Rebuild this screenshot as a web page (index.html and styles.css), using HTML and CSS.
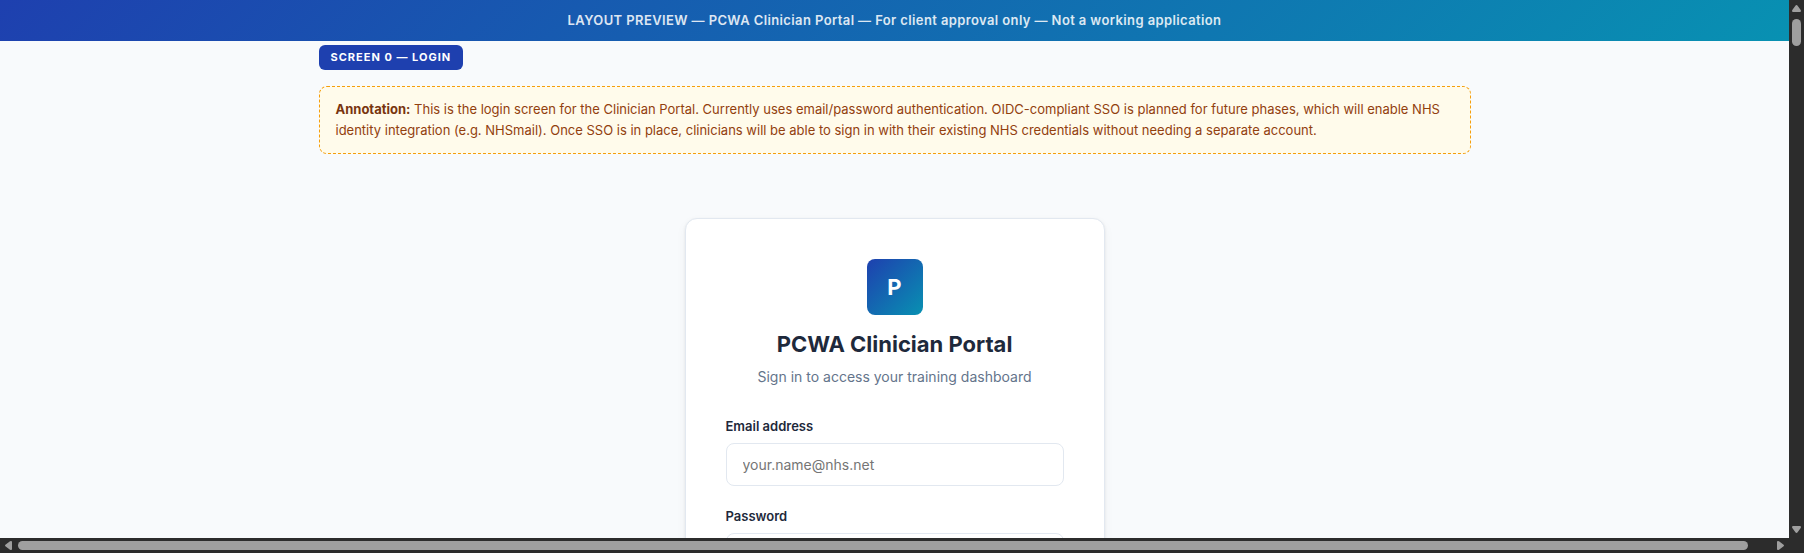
FILE: index.html
```html
<!DOCTYPE html>
<html lang="en">
<head>
<meta charset="utf-8">
<title>PCWA Clinician Portal</title>
<link rel="stylesheet" href="styles.css">
</head>
<body>
<div class="window">
  <div class="viewport">
    <header class="banner"><span class="banner-text">LAYOUT PREVIEW — PCWA Clinician Portal — For client approval only — Not a working application</span></header>
    <main class="screen">
      <div class="screen-label">SCREEN 0 — LOGIN</div>
      <p class="annotation"><strong>Annotation:</strong> This is the login screen for the Clinician Portal. Currently uses email/password authentication. OIDC-compliant SSO is planned for future phases, which will enable NHS identity integration (e.g. NHSmail). Once SSO is in place, clinicians will be able to sign in with their existing NHS credentials without needing a separate account.</p>
      <form class="card">
        <div class="logo">P</div>
        <h1 class="title">PCWA Clinician Portal</h1>
        <p class="subtitle">Sign in to access your training dashboard</p>
        <div class="field">
          <label class="label" for="email">Email address</label>
          <input class="input" id="email" type="email" placeholder="your.name@nhs.net">
        </div>
        <div class="field">
          <label class="label" for="password">Password</label>
          <input class="input" id="password" type="password">
        </div>
      </form>
    </main>
  </div>
  <div class="bar bar-vertical">
    <svg class="arrow" viewBox="0 0 9 7"><path d="M4.5 0Q5.2 0 5.6.7L8.7 5Q9.4 7 8 7H1Q-.4 7 .3 5L3.4.7Q3.8 0 4.5 0Z"/></svg>
    <div class="thumb thumb-vertical"></div>
    <svg class="arrow arrow-end" viewBox="0 0 9 7"><path d="M4.5 7Q5.2 7 5.6 6.3L8.7 2Q9.4 0 8 0H1Q-.4 0 .3 2L3.4 6.3Q3.8 7 4.5 7Z"/></svg>
  </div>
  <div class="bar bar-horizontal">
    <svg class="arrow-side" viewBox="0 0 7 9"><path d="M0 4.5Q0 3.8.7 3.4L5 .3Q7-.4 7 1V8Q7 9.4 5 8.7L.7 5.6Q0 5.2 0 4.5Z"/></svg>
    <div class="thumb thumb-horizontal"></div>
    <svg class="arrow-side" viewBox="0 0 7 9"><path d="M7 4.5Q7 3.8 6.3 3.4L2 .3Q0-.4 0 1V8Q0 9.4 2 8.7L6.3 5.6Q7 5.2 7 4.5Z"/></svg>
  </div>
  <div class="corner"></div>
</div>
</body>
</html>
```
FILE: styles.css
```css
* { box-sizing: border-box; }
body {
  margin: 0;
  font-family: Inter, "Liberation Sans", sans-serif;
  color: #1e293b;
  background: #f8fafc;
}
.window {
  display: grid;
  grid-template-columns: minmax(0, 1fr) 15px;
  grid-template-rows: minmax(0, 1fr) 15px;
  height: 100vh;
}
.viewport { overflow: hidden; background: #f8fafc; }
.banner {
  padding: 10px 24px;
  font-size: 13px;
  font-weight: 600;
  line-height: 21px;
  text-align: center;
  color: #fff;
  background: linear-gradient(135deg, #1e40af, #0891b2);
  letter-spacing: 0.03em;
}
.banner-text { opacity: 0.85; }
.screen {
  max-width: 1200px;
  margin: 0 auto;
  padding: 4px 24px 48px;
}
.screen-label {
  width: fit-content;
  padding: 4px 12px;
  border-radius: 6px;
  font-size: 11px;
  font-weight: 700;
  line-height: 17px;
  letter-spacing: 1px;
  color: #fff;
  background: #1e40af;
}
.annotation {
  margin: 16px 0 64px;
  padding: 12px 16px;
  border: 1px dashed #f59e0b;
  border-radius: 8px;
  font-size: 13px;
  line-height: 21px;
  color: #92400e;
  background: #fffbeb;
}
.annotation strong { color: #78350f; }
.card {
  max-width: 420px;
  margin: 0 auto;
  padding: 40px;
  border: 1px solid #e2e8f0;
  border-radius: 12px;
  background: #fff;
  box-shadow: 0 1px 3px rgba(0, 0, 0, 0.08), 0 4px 12px rgba(0, 0, 0, 0.04);
}
.logo {
  display: grid;
  place-items: center;
  width: 56px;
  height: 56px;
  margin: 0 auto 12px;
  border-radius: 8px;
  font-size: 22px;
  font-weight: 700;
  color: #fff;
  background: linear-gradient(135deg, #1e40af, #0891b2);
}
.title {
  margin: 0 0 4px;
  font-size: 22px;
  font-weight: 700;
  line-height: 35px;
  text-align: center;
}
.subtitle {
  margin: 0 0 28px;
  font-size: 14px;
  line-height: 22px;
  text-align: center;
  color: #64748b;
}
.field { margin-bottom: 20px; }
.label {
  display: block;
  margin-bottom: 6px;
  font-size: 13px;
  font-weight: 600;
  line-height: 21px;
}
.input {
  display: block;
  width: 100%;
  height: 43px;
  padding: 12px 16px;
  border: 1px solid #e2e8f0;
  border-radius: 8px;
  font-family: inherit;
  font-size: 14px;
  background: #fff;
}
.bar { display: flex; align-items: center; background: #2c2c2c; }
.bar-vertical { flex-direction: column; padding: 5px 0; }
.bar-horizontal { padding: 0 5px; gap: 6px; }
.arrow { width: 9px; height: 7px; fill: #9f9f9f; }
.arrow-end { margin-top: auto; }
.arrow-side { width: 7px; height: 9px; fill: #9f9f9f; }
.thumb { border-radius: 5px; background: #9f9f9f; }
.thumb-vertical { width: 9px; height: 27px; margin-top: 7px; }
.thumb-horizontal { flex: 1; height: 9px; margin-right: 23px; }
.corner { background: #2c2c2c; }
```
